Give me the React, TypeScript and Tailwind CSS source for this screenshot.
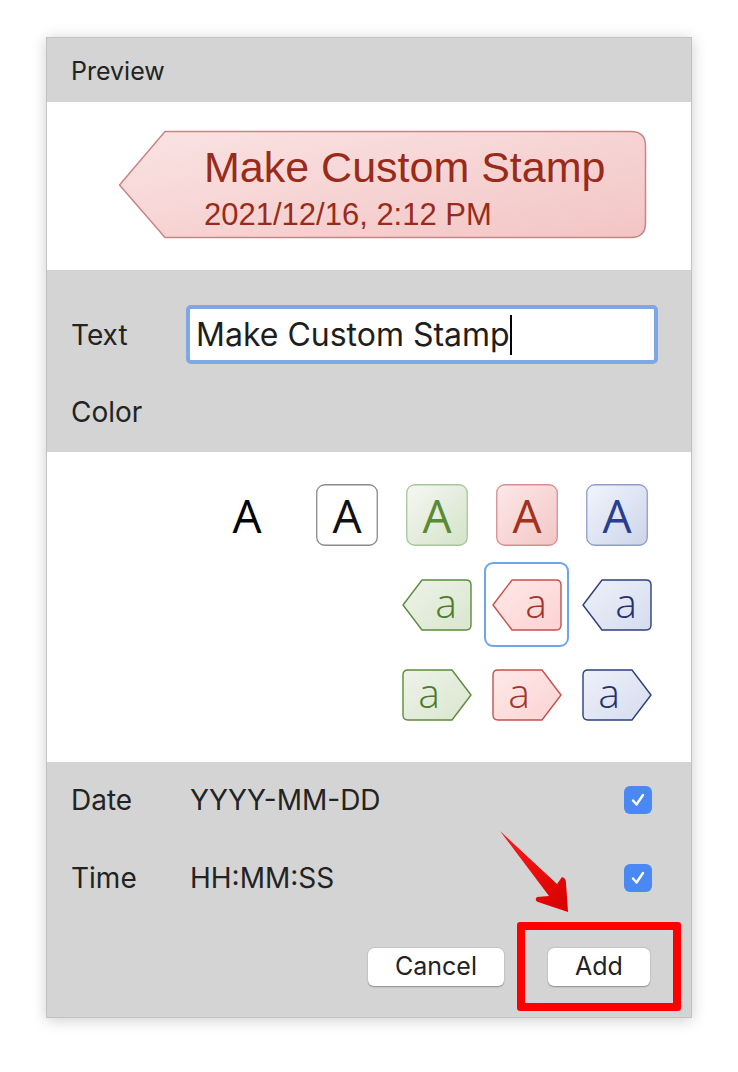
import React from 'react';

type Tone = 'green' | 'red' | 'blue';

const tones = {
  green: { stroke: '#5d8a3c', from: '#eef3e9', to: '#d9e6cf', text: '#4d7b2a' },
  red: { stroke: '#c2534b', from: '#ffe8e8', to: '#fbd3d3', text: '#a2342a' },
  blue: { stroke: '#2d3f7c', from: '#eef1f9', to: '#d5dcee', text: '#25326f' },
};

const boxTones = {
  white: { stroke: '#8a8a8a', from: '#ffffff', to: '#ffffff', text: '#111111' },
  green: { stroke: '#a8c69a', from: '#f7f7f5', to: '#d3e3c8', text: '#5b8a35' },
  red: { stroke: '#d68f8f', from: '#fde8e8', to: '#f3c6c6', text: '#a2311f' },
  blue: { stroke: '#8f9dc8', from: '#f1f5fc', to: '#ccd4ea', text: '#26408f' },
};

const LetterBox = ({ tone }: { tone: keyof typeof boxTones }) => {
  const t = boxTones[tone];
  const id = `box-${tone}`;
  return (
    <div className="relative w-[62px] h-[62px] flex items-center justify-center">
      <svg className="absolute inset-0" width="62" height="62" viewBox="0 0 62 62">
        <defs>
          <linearGradient id={id} x1="0" y1="0" x2="1" y2="1">
            <stop offset="0" stopColor={t.from} />
            <stop offset="1" stopColor={t.to} />
          </linearGradient>
        </defs>
        <rect x="0.75" y="0.75" width="60.5" height="60.5" rx="8" fill={`url(#${id})`} stroke={t.stroke} strokeWidth="1.3" />
      </svg>
      <span className="relative text-[46px] leading-none font-['Open_Sans',sans-serif]" style={{ color: t.text }}>
        A
      </span>
    </div>
  );
};

const Tag = ({ tone, dir, selected }: { tone: Tone; dir: 'left' | 'right'; selected?: boolean }) => {
  const t = tones[tone];
  const id = `tag-${tone}-${dir}`;
  const d =
    dir === 'left'
      ? 'M1 26 L20 1 H64 Q69 1 69 6 V46 Q69 51 64 51 H20 Z'
      : 'M1 6 Q1 1 6 1 H50 L69 26 L50 51 H6 Q1 51 1 46 Z';
  return (
    <div className="relative w-[70px] h-[52px] flex items-center">
      {selected && (
        <div className="absolute -left-[8px] -right-[7px] -top-[17px] -bottom-[16px] rounded-[9px] border-2 border-[#6ea4e9]" />
      )}
      <svg className="absolute inset-0" width="70" height="52" viewBox="0 0 70 52">
        <defs>
          <linearGradient id={id} x1="0" y1="0" x2="1" y2="1">
            <stop offset="0" stopColor={t.from} />
            <stop offset="1" stopColor={t.to} />
          </linearGradient>
        </defs>
        <path d={d} fill={`url(#${id})`} stroke={t.stroke} strokeWidth="1.4" strokeLinejoin="round" />
      </svg>
      <span
        className={`relative w-[46px] text-center text-[41px] font-light leading-none pb-[6px] font-['Open_Sans',sans-serif] ${dir === 'left' ? 'ml-[21px]' : 'ml-[4px]'}`}
        style={{ color: t.text }}
      >
        a
      </span>
    </div>
  );
};

const Check = () => (
  <div className="w-[28px] h-[28px] rounded-[6px] bg-[#4a89f3] flex items-center justify-center">
    <svg width="18" height="18" viewBox="0 0 18 18">
      <path d="M4 9.5 L7.5 13.5 L14 4" fill="none" stroke="white" strokeWidth="2.4" strokeLinecap="round" strokeLinejoin="round" />
    </svg>
  </div>
);

export default function App() {
  return (
    <div className="relative w-[738px] min-h-[1072px] bg-white pt-[37px] pl-[46px] font-['Inter',sans-serif] text-[#232323]">
      <div className="w-[646px] h-[981px] flex flex-col bg-[#d4d4d4] border border-[#c2c2c2] shadow-[0_2px_14px_rgba(0,0,0,0.2)]">
        {/* header */}
        <div className="h-[64px] flex items-center pl-[24px] pt-[3px] text-[25px]">Preview</div>

        {/* stamp preview */}
        <div className="h-[168px] bg-white pt-[28px] pl-[71px]">
          <div className="relative w-[530px] h-[110px]">
            <svg className="absolute inset-0" width="530" height="110" viewBox="0 0 530 110">
              <defs>
                <linearGradient id="stamp" x1="0" y1="0" x2="1" y2="1">
                  <stop offset="0" stopColor="#fae3e3" />
                  <stop offset="1" stopColor="#f3c5c5" />
                </linearGradient>
              </defs>
              <path
                d="M1.5 55 L47 1.5 H513 Q527.5 1.5 527.5 16 V93 Q527.5 107.5 513 107.5 H47 Z"
                fill="url(#stamp)"
                stroke="#c98585"
                strokeWidth="1.5"
              />
            </svg>
            <div className="relative pl-[86px] pt-[13px] flex flex-col font-['Liberation_Sans',sans-serif] text-[#992b1a]">
              <span className="text-[43px] leading-[48px]">Make Custom Stamp</span>
              <span className="text-[31px] leading-[47px]">2021/12/16, 2:12 PM</span>
            </div>
          </div>
        </div>

        {/* form */}
        <div className="h-[182px] pt-[35px] pl-[24px]">
          <div className="flex items-center h-[59px]">
            <div className="w-[115px] text-[28px]">Text</div>
            <div className="w-[472px] h-[59px] rounded-[5px] border-4 border-[#7fa7e7] bg-white flex items-center pl-[6px] text-[32px] text-[#1e1e1e]">
              <span>Make Custom Stamp</span>
              <span className="inline-block w-[2px] h-[40px] bg-black" />
            </div>
          </div>
          <div className="flex items-center h-[56px] mt-[20px] text-[28px]">Color</div>
        </div>

        {/* colors */}
        <div className="h-[310px] bg-white pt-[32px] flex flex-col items-end">
          <div className="flex items-center pr-[43px]">
            <div className="w-[62px] h-[62px] mr-[38px] flex items-center justify-center text-[46px] leading-none text-black font-['Open_Sans',sans-serif]">
              A
            </div>
            <div className="flex gap-[28px]">
              <LetterBox tone="white" />
              <LetterBox tone="green" />
              <LetterBox tone="red" />
              <LetterBox tone="blue" />
            </div>
          </div>
          <div className="flex gap-[20px] pr-[39px] mt-[33px]">
            <Tag tone="green" dir="left" />
            <Tag tone="red" dir="left" selected />
            <Tag tone="blue" dir="left" />
          </div>
          <div className="flex gap-[20px] pr-[39px] mt-[38px]">
            <Tag tone="green" dir="right" />
            <Tag tone="red" dir="right" />
            <Tag tone="blue" dir="right" />
          </div>
        </div>

        {/* options */}
        <div className="flex-1 pt-[18px] pl-[24px] pr-[39px] text-[28px]">
          <div className="flex items-center h-[40px]">
            <div className="w-[119px]">Date</div>
            <div className="flex-1">YYYY-MM-DD</div>
            <Check />
          </div>
          <div className="flex items-center h-[40px] mt-[38px]">
            <div className="w-[119px]">Time</div>
            <div className="flex-1">HH:MM:SS</div>
            <Check />
          </div>
          <div className="flex justify-end gap-[44px] mt-[50px] pr-[2px] text-[25px]">
            <button className="w-[136px] h-[38px] rounded-[6px] bg-white shadow-[0_0.5px_1.5px_rgba(0,0,0,0.35)] text-[#222]">
              Cancel
            </button>
            <button className="w-[102px] h-[38px] rounded-[6px] bg-white shadow-[0_0.5px_1.5px_rgba(0,0,0,0.35)] text-[#222]">
              Add
            </button>
          </div>
        </div>
      </div>

      {/* annotation: red arrow and highlight box */}
      <svg className="absolute left-0 top-0 pointer-events-none" width="738" height="1072">
        <defs>
          <linearGradient id="arrow" x1="0" y1="0" x2="1" y2="1">
            <stop offset="0" stopColor="#ff1a1a" />
            <stop offset="1" stopColor="#d60000" />
          </linearGradient>
        </defs>
        <path d="M500 831 L557 884 L562 877 Q566 878 566 883 L568 912 L538 902 Q534 900 537 897 L549 896 Z" fill="url(#arrow)" />
      </svg>
      <div className="absolute left-[517px] top-[922px] w-[164px] h-[89px] border-[8px] border-[#ff0000] rounded-[3px]" />
    </div>
  );
}
